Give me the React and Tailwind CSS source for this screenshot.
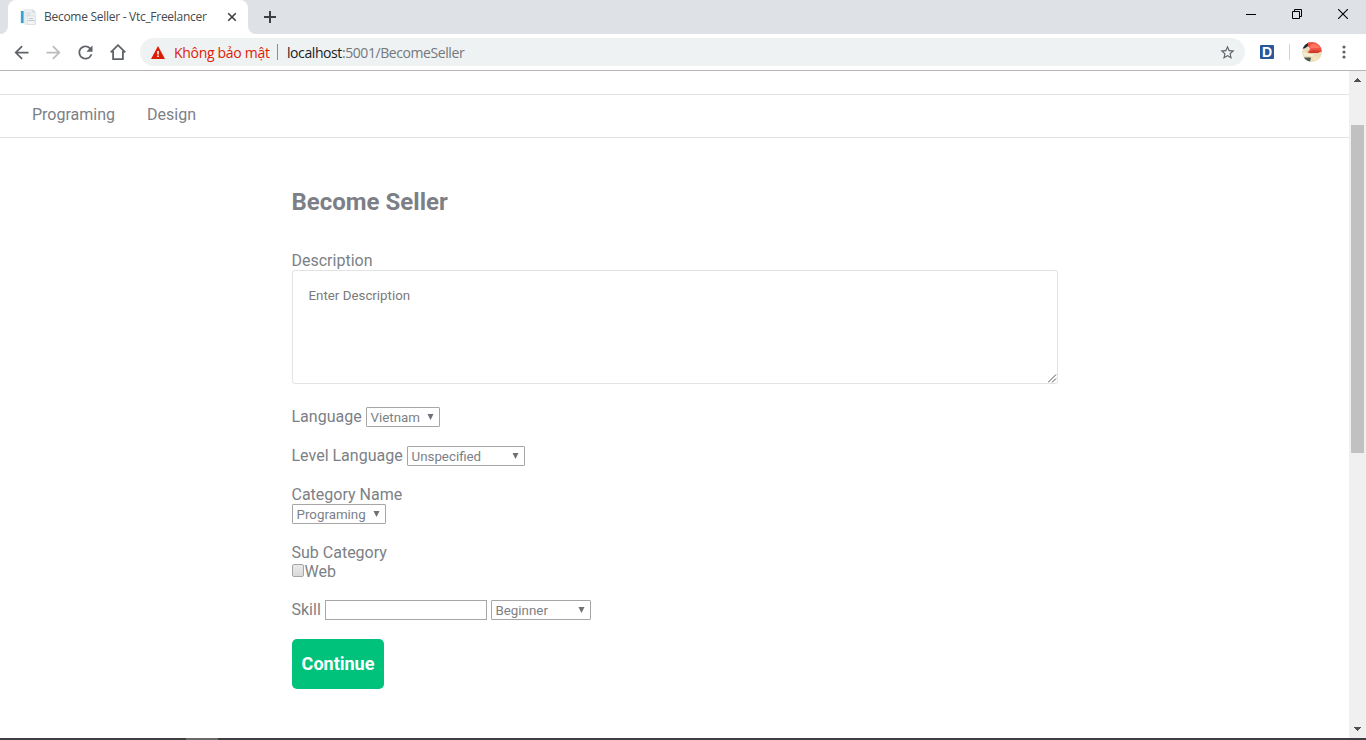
import React from "react";

function MaterialIcon({ d, className }) {
  return (
    <svg viewBox="0 0 24 24" className={`shrink-0 ${className}`} fill="currentColor">
      <path d={d} />
    </svg>
  );
}

function Favicon() {
  return (
    <svg viewBox="0 0 16 16" className="size-4 shrink-0">
      <path d="M0 1.500h6v13H0z" fill="#e3f2f9" />
      <path d="M1 2h2.600v12H1z" fill="#35a3cf" />
      <path d="M4.500.5h8L15.500 3v12.300h-11z" fill="#eceff1" stroke="#dde1e4" strokeWidth=".5" />
      <path d="M12.500.5 15.500 3.200h-3z" fill="#cdd3d8" />
      <path d="M6 4h5M6 6h4" stroke="#d5dade" />
      <path d="M7.500 7h7.500v8.500H7.500z" fill="#f4f5f6" stroke="#d0d6da" strokeWidth=".6" />
      <path d="M8 11.500h6.500M9 9.500h4" stroke="#bcc5cc" />
    </svg>
  );
}

function TabStrip() {
  return (
    <div className="flex h-[34px] bg-[#dee1e6]">
      <svg viewBox="0 0 8 34" className="h-[34px] w-2 shrink-0">
        <path d="M8 26a8 8 0 0 1-8 8h8z" fill="#fff" />
      </svg>
      <div className="flex w-60 items-center rounded-t-lg bg-white pl-3 pr-2">
        <Favicon />
        <span className="ml-2 w-[183px] whitespace-nowrap font-['Open_Sans',sans-serif] text-[12px] tracking-[-0.280px] text-[#45494d]">
          Become Seller - Vtc_Freelancer
        </span>
        <svg viewBox="0 0 10 10" className="-ml-[0.500px] size-[10px] shrink-0">
          <path d="M1.200 1.200 8.800 8.800M8.800 1.200 1.200 8.800" stroke="#3c4043" strokeWidth="1.600" />
        </svg>
      </div>
      <svg viewBox="0 0 8 34" className="h-[34px] w-2 shrink-0">
        <path d="M0 26a8 8 0 0 0 8 8H0z" fill="#fff" />
      </svg>
      <svg viewBox="0 0 12 12" className="ml-2 mt-[11px] size-3 shrink-0">
        <path d="M6 0v12M0 6h12" stroke="#3c4043" strokeWidth="2" />
      </svg>
      <div className="ml-auto flex items-start gap-[36px] pr-[18px] pt-[9px]">
        <svg viewBox="0 0 10 10" className="size-[10px]">
          <path d="M0 5.500h10" stroke="#000" />
        </svg>
        <svg viewBox="0 0 10 10" className="size-[10px]" fill="none" stroke="#000">
          <path d="M.5 2.500h7v7h-7zM2.500 2.500v-2h7v7h-2" />
        </svg>
        <svg viewBox="0 0 10 10" className="size-[10px]">
          <path d="M0 0 10 10M10 0 0 10" stroke="#000" strokeWidth="1.100" />
        </svg>
      </div>
    </div>
  );
}

function Avatar() {
  return (
    <svg viewBox="0 0 20 20" className="size-5 shrink-0">
      <clipPath id="avatar-circle">
        <circle cx="10" cy="10" r="10" />
      </clipPath>
      <g clipPath="url(#avatar-circle)">
        <path d="M0 0h20v20H0z" fill="#eadfba" />
        <path d="M0 0h8L6 6.500H0z" fill="#1d2838" />
        <path d="m2 7 4-3 3 3-3 1.500z" fill="#e9dcc0" />
        <path d="M6 0h14v9.500l-5 1.500-9-1.500L8.500 7 6 4z" fill="#f0503f" />
        <path d="M10 2c3-1 6 1 8 4l-8 .5-3-1z" fill="#ff7763" />
        <path d="m5 10 7-1.800 7 .8-3 2-8 .2z" fill="#d23a2b" />
        <path d="M1 10c4 1.500 8 2.200 12 1.500l-3 3-8-1z" fill="#f5efd2" />
        <path d="M2 15.500h7L8 20H3z" fill="#4c5a52" />
        <path d="m11 14 6 1-3 4-3-1z" fill="#f7e6bd" />
      </g>
    </svg>
  );
}

function Toolbar() {
  return (
    <div className="flex h-[37px] items-center border-b border-[#b6b4b6] bg-white pl-[11px] text-[#5f6368]">
      <MaterialIcon className="size-[21px]" d="M20 11H7.830l5.590-5.590L12 4l-8 8 8 8 1.410-1.410L7.830 13H20v-2z" />
      <MaterialIcon className="ml-[11px] size-[21px] text-[#babcbe]" d="m12 4-1.410 1.410L16.170 11H4v2h12.170l-5.580 5.590L12 20l8-8z" />
      <MaterialIcon
        className="ml-[11px] size-[21px]"
        d="M17.650 6.350A7.958 7.958 0 0 0 12 4c-4.420 0-7.990 3.580-7.990 8s3.570 8 7.990 8c3.730 0 6.840-2.550 7.730-6h-2.080A5.990 5.990 0 0 1 12 18c-3.310 0-6-2.690-6-6s2.690-6 6-6c1.660 0 3.140.69 4.220 1.780L13 11h7V4l-2.350 2.350z"
      />
      <svg viewBox="0 0 16 16" className="ml-[14px] size-4 shrink-0" fill="none" stroke="currentColor" strokeWidth="1.800">
        <path d="M.7 8.300 8 1.200l7.300 7.100M3.100 7v8.100h9.800V7" />
      </svg>
      <div className="ml-[14px] flex h-7 w-[1105px] shrink-0 items-center rounded-full bg-[#eff2f3] pl-[11px] pr-[9.500px] font-['Open_Sans',sans-serif] text-[14px]">
        <svg viewBox="0 0 14 13" className="h-[13px] w-[14px] shrink-0">
          <path d="M7 0l7 13H0z" fill="#dd1c06" />
          <path d="M7 5v3.500M7 9.500V11" stroke="#fff" strokeWidth="1.600" />
        </svg>
        <span className="ml-[9px] w-[103px] whitespace-nowrap tracking-[-0.300px] text-[#dd1c06]">Không bảo mật</span>
        <span className="h-4 w-px bg-[#8c8f92]" />
        <span className="ml-[9px] whitespace-nowrap tracking-[-0.420px] text-[#74787c]">
          <span className="text-[#202124]">localhost</span>:5001/BecomeSeller
        </span>
        <MaterialIcon
          className="ml-auto size-[17px]"
          d="m22 9.240-7.190-.62L12 2 9.190 8.630 2 9.240l5.460 4.730L5.820 21 12 17.270 18.180 21l-1.630-7.030L22 9.240zM12 15.400l-3.760 2.270 1-4.280-3.320-2.880 4.380-.38L12 6.100l1.710 4.040 4.380.38-3.320 2.880 1 4.280L12 15.400z"
        />
      </div>
      <span className="ml-[15px] flex size-[14px] shrink-0 items-center justify-center rounded-[1px] bg-[#2b5797] font-['Liberation_Sans',sans-serif] text-[14px] font-bold leading-none text-white">
        D
      </span>
      <span className="ml-[15px] h-4 w-px shrink-0 bg-[#cfd1d4]" />
      <div className="ml-3 flex">
        <Avatar />
      </div>
      <svg viewBox="0 0 4 14" className="ml-5 h-[14px] w-1 shrink-0" fill="currentColor">
        <circle cx="2" cy="2" r="1.600" />
        <circle cx="2" cy="7" r="1.600" />
        <circle cx="2" cy="12" r="1.600" />
      </svg>
    </div>
  );
}

function SelectBox({ value, className }) {
  return (
    <button
      type="button"
      className={`flex h-5 items-center justify-between rounded-[1px] border border-[#a6a6a6] bg-white pl-[3.500px] pr-[5.500px] text-[13.330px] leading-[18px] ${className}`}
    >
      <span className="pt-[2px]">{value}</span>
      <svg viewBox="0 0 7 6" className="h-[6px] w-[7px]">
        <path d="M.5 0h6L3.500 6z" fill="#6d7177" />
      </svg>
    </button>
  );
}

function SellerForm() {
  return (
    <form className="ml-[292px] w-[766px] pt-[46px] leading-[19px]">
      <h1 className="-ml-[0.500px] h-[67px] text-[24px] font-bold leading-[36px]">Become Seller</h1>
      <label className="-ml-[0.500px] block">Description</label>
      <div className="relative h-[114px] rounded-[3px] border border-[#e2e3e3] px-[15.500px] pt-[15px] text-[13.330px] text-[#7a7a7a]">
        Enter Description
        <svg viewBox="0 0 9 9" className="absolute bottom-0 right-0 size-[9px]">
          <path d="M0 8.500 8 .5M4 8.500 8 4.500" stroke="#4f4f4f" strokeWidth="1" />
        </svg>
      </div>
      <div className="mt-[23px] flex h-5 gap-1">
        <label className="-ml-[0.500px] w-[70.500px]">Language</label>
        <SelectBox value="Vietnam" className="w-[74px]" />
      </div>
      <div className="mt-[19px] flex h-5 gap-1">
        <label className="-ml-[0.500px] w-[111.500px] whitespace-nowrap">Level Language</label>
        <SelectBox value="Unspecified" className="w-[118px]" />
      </div>
      <div className="mt-[19px]">
        <label className="-ml-[0.500px] block">Category Name</label>
        <SelectBox value="Programing" className="w-[94px]" />
      </div>
      <div className="mt-[19px]">
        <label className="-ml-[0.500px] block">Sub Category</label>
        <label className="flex">
          <span className="mr-[0.500px] mt-[2px] h-[13px] w-3 rounded-[2px] border border-[#a5a5a5] bg-gradient-to-b from-[#eaeaea] to-[#dadada]" />
          Web
        </label>
      </div>
      <div className="mt-[19px] flex h-5 gap-1">
        <label className="-ml-[0.500px] w-[29.500px]">Skill</label>
        <span className="w-[162px] border border-[#a6a6a6] bg-white" />
        <SelectBox value="Beginner" className="w-[100px]" />
      </div>
      <button type="button" className="mt-[19px] h-[50px] w-[92px] rounded-[5px] bg-[#00c27a] pb-[2px] text-[18px] font-bold text-white">
        Continue
      </button>
    </form>
  );
}

function Scrollbar() {
  return (
    <div className="flex w-[17px] shrink-0 flex-col items-center bg-[#f0f0f0] text-[#505050]">
      <svg viewBox="0 0 7 4" className="mt-[7px] h-1 w-[7px] shrink-0" fill="currentColor">
        <path d="M3 0h1v1h1v1h1v1h1v1H0V3h1V2h1V1h1z" />
      </svg>
      <div className="mt-[43px] h-[328px] w-[13px] shrink-0 bg-[#c1c1c1]" />
      <svg viewBox="0 0 7 4" className="mb-[7px] mt-auto h-1 w-[7px] shrink-0" fill="currentColor">
        <path d="M0 0h7v1H6v1H5v1H4v1H3V3H2V2H1V1H0z" />
      </svg>
    </div>
  );
}

export default function App() {
  return (
    <div className="flex h-[740px] w-[1366px] flex-col overflow-hidden bg-white">
      <TabStrip />
      <Toolbar />
      <div className="flex min-h-0 flex-1">
        <main className="flex-1 pt-[23px] font-[Roboto,sans-serif] text-[16px] text-[#7c7f86]">
          <nav className="flex h-11 gap-8 border-y border-[#e2e3e3] pl-8 pt-[10px] leading-[19px]">
            <a>Programing</a>
            <a>Design</a>
          </nav>
          <SellerForm />
        </main>
        <Scrollbar />
      </div>
      <div className="flex h-[2px] bg-[#403e43]">
        <span className="ml-[186px] w-8 bg-[#6b6b6b]" />
      </div>
    </div>
  );
}
